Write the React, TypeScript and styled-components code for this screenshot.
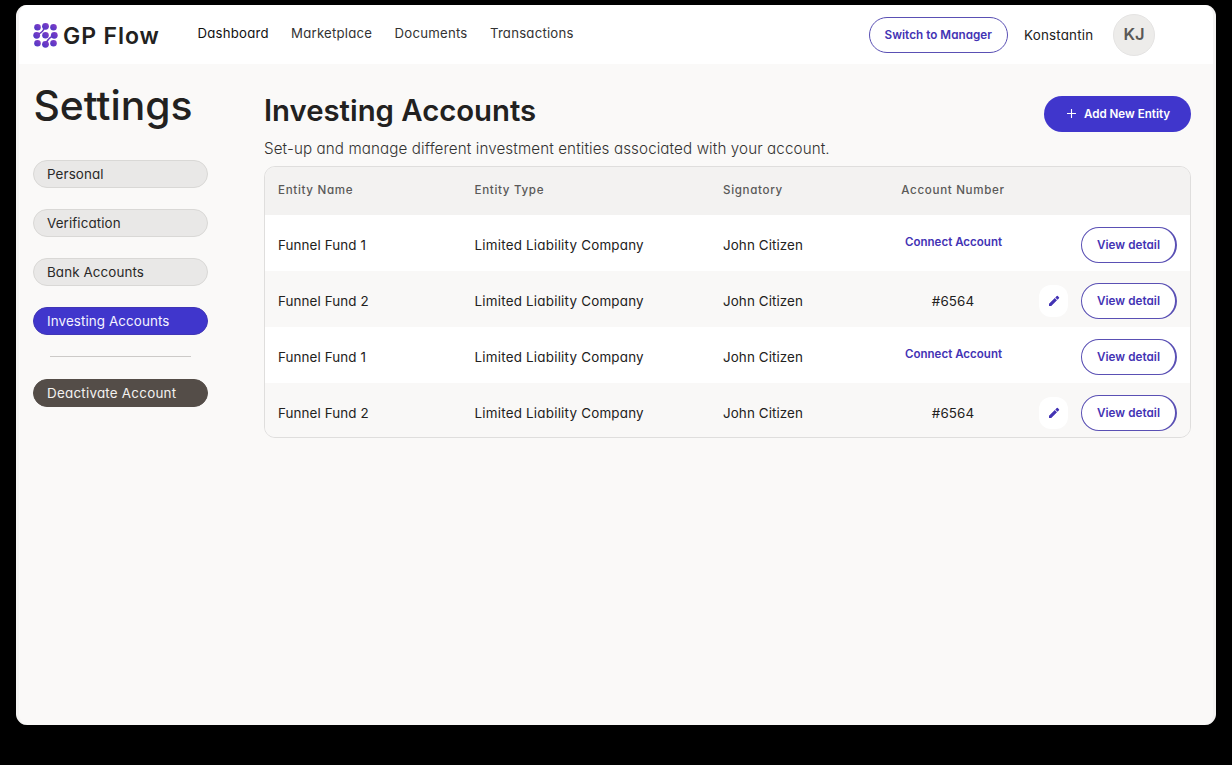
import React from "react";
import styled, { createGlobalStyle } from "styled-components";

const GlobalStyle = createGlobalStyle`
  * { box-sizing: border-box; }
  html, body { margin: 0; background: #000; }
  body {
    font-family: Inter, "Liberation Sans", sans-serif;
    font-feature-settings: "cv11" 1;
    color: #222120;
  }
  h1, h2, p { margin: 0; }
  button { font: inherit; font-feature-settings: inherit; margin: 0; padding: 0; }
`;

const Desktop = styled.div`
  height: 765px;
  padding: 5px 16px 40px;
  background: #000;
`;

const Window = styled.div`
  display: flex;
  flex-direction: column;
  height: 720px;
  border-radius: 11px;
  overflow: hidden;
  background: #faf9f8;
  border: solid #f4f3f2;
  border-width: 0 3px;
`;

const Header = styled.header`
  display: flex;
  align-items: center;
  height: 59px;
  padding: 1px 58px 0 14px;
  background: #fff;
`;

const Brand = styled.div`
  display: flex;
  align-items: center;
  width: 164px;
  gap: 5px;
`;

const BrandName = styled.span`
  padding-top: 1px;
  font-size: 23px;
  line-height: 28px;
  font-weight: 580;
  letter-spacing: 0.9px;
  white-space: nowrap;
`;

const Nav = styled.nav`
  display: flex;
  gap: 22.4px;
  padding: 0 0 4px 0.5px;
`;

const NavLink = styled.a<{ $active?: boolean }>`
  font-size: 13.2px;
  line-height: 20px;
  letter-spacing: 0.22px;
  color: ${(p) => (p.$active ? "#111" : "#333")};
`;

const UserArea = styled.div`
  display: flex;
  align-items: center;
  margin-left: auto;
`;

const OutlineButton = styled.button<{ $width: number; $heavy?: boolean }>`
  width: ${(p) => p.$width}px;
  height: 36px;
  padding-bottom: 1px;
  border: 1px solid #5a50b4;
  border-right-width: ${(p) => (p.$heavy ? 2 : 1)}px;
  border-radius: 18px;
  background: #fff;
  color: #4333b4;
  font-size: 11.7px;
  font-weight: 600;
  letter-spacing: 0.03px;
  white-space: nowrap;
`;

const UserName = styled.span`
  width: 89px;
  margin-left: 16px;
  padding-bottom: 1px;
  font-size: 13.4px;
  letter-spacing: 0.2px;
`;

const Avatar = styled.div`
  display: grid;
  place-items: center;
  width: 42px;
  height: 42px;
  padding-bottom: 2px;
  border: 1px solid #e4e3e2;
  border-radius: 50%;
  background: #edecea;
  color: #595857;
  font-size: 16.5px;
  font-weight: 600;
`;

const Body = styled.div`
  display: flex;
  flex: 1;
  padding: 0 22px 0 14px;
`;

const Sidebar = styled.aside`
  flex: none;
  width: 175px;
  margin-right: 56px;
  padding-top: 15px;
`;

const PageTitle = styled.h1`
  height: 81px;
  padding-left: 0.5px;
  font-size: 40.8px;
  line-height: 52px;
  font-weight: 500;
  white-space: nowrap;
`;

const Menu = styled.div`
  display: flex;
  flex-direction: column;
  gap: 21px;
`;

const menuTones = {
  plain: { bg: "#e9e8e7", edge: "#d9d8d6", text: "#2a2928" },
  active: { bg: "#4036cc", edge: "#4036b6", text: "#f4f3ff" },
  danger: { bg: "#544d48", edge: "#544d48", text: "#f3f1ef" },
};

const MenuItem = styled.button<{ $tone: keyof typeof menuTones }>`
  height: 28px;
  padding: 0 13px;
  border: 1px solid ${(p) => menuTones[p.$tone].edge};
  border-radius: 14px;
  background: ${(p) => menuTones[p.$tone].bg};
  color: ${(p) => menuTones[p.$tone].text};
  font-size: 13.4px;
  letter-spacing: ${(p) => (p.$tone === "danger" ? 0.24 : 0.1)}px;
  text-align: left;
`;

const Divider = styled.hr`
  width: 141px;
  height: 1px;
  margin: 0 auto 1px;
  border: 0;
  background: #cccac8;
`;

const Main = styled.main`
  flex: 1;
  min-width: 0;
  padding-top: 26px;
`;

const Intro = styled.div`
  display: flex;
  justify-content: space-between;
  height: 76px;
`;

const SectionTitle = styled.h2`
  height: 49px;
  padding-top: 1px;
  font-size: 29.3px;
  line-height: 40px;
  font-weight: 600;
`;

const Subtitle = styled.p`
  font-size: 15.2px;
  line-height: 20px;
  font-weight: 300;
  letter-spacing: 0.1px;
  color: #333231;
`;

const AddButton = styled.button`
  display: flex;
  align-items: center;
  justify-content: center;
  gap: 8px;
  width: 147px;
  height: 36px;
  margin-top: 6px;
  padding: 0 0 1px 2px;
  border: 0;
  border-radius: 18px;
  background: #4036cc;
  color: #fff;
  font-size: 11.6px;
  font-weight: 600;
`;

const Table = styled.div`
  height: 272px;
  border: 1px solid #dfdedd;
  border-radius: 11px;
  overflow: hidden;
`;

const gridColumns = "196.5px 248.5px 145px 170px 1fr";

const HeadRow = styled.div`
  display: grid;
  grid-template-columns: ${gridColumns};
  align-items: center;
  height: 48px;
  padding: 0 13px 3px;
  background: #f3f2f1;
  color: #5a5958;
  font-size: 11.6px;
  font-weight: 500;
  letter-spacing: 0.67px;
`;

const Row = styled.div<{ $shaded: boolean }>`
  display: grid;
  grid-template-columns: ${gridColumns};
  align-items: center;
  height: 56px;
  padding: 4px 13px 0;
  background: ${(p) => (p.$shaded ? "#f9f8f7" : "#fff")};
  font-size: 13.4px;
  letter-spacing: 0.1px;
`;

const EntityType = styled.span`
  letter-spacing: 0.22px;
`;

const AccountCell = styled.div`
  text-align: center;
`;

const ConnectLink = styled.a`
  display: block;
  padding: 0 0 7px 1px;
  color: #4333b4;
  font-size: 11.5px;
  font-weight: 600;
  letter-spacing: 0.03px;
`;

const Actions = styled.div`
  display: flex;
  align-items: center;
  justify-content: flex-end;
  gap: 13px;
`;

const EditButton = styled.button`
  display: grid;
  place-items: center;
  width: 29px;
  height: 32px;
  border: 0;
  border-radius: 12px;
  background: #fff;
`;

const Logo = () => (
  <svg width="25" height="26" viewBox="0 0 25 26">
    <defs>
      <linearGradient id="brand" x1="0" y1="1" x2="1" y2="0">
        <stop offset="0" stopColor="#4438c4" />
        <stop offset="1" stopColor="#8b3cc8" />
      </linearGradient>
    </defs>
    <g fill="url(#brand)">
      <circle cx="4.5" cy="5.3" r="3.3" />
      <circle cx="12.5" cy="4.3" r="3.4" />
      <circle cx="20.5" cy="5.3" r="3.3" />
      <circle cx="3.7" cy="13.3" r="3.4" />
      <circle cx="12.5" cy="13.3" r="3.3" />
      <circle cx="21.3" cy="13.3" r="3.4" />
      <circle cx="4.5" cy="21.3" r="3.3" />
      <circle cx="12.5" cy="22.3" r="3.4" />
      <circle cx="20.5" cy="21.3" r="3.3" />
    </g>
    <path d="M5.5 12.2Q10 9.8 11.5 6M13.5 20.3Q15 16.5 19.5 14.1" stroke="#6638c4" strokeWidth="1.3" fill="none" />
  </svg>
);

const Pencil = () => (
  <svg width="12" height="12" viewBox="0 0 24 24" fill="#4333b4">
    <path d="M2 17.5V22h4.5L18 10.5 13.5 6zM22 6.5a1.5 1.5 0 0 0 0-2L19.5 2a1.5 1.5 0 0 0-2 0L14.5 5 19 9.5z" />
  </svg>
);

const Plus = () => (
  <svg width="9" height="9" viewBox="0 0 9 9" stroke="#fff" strokeWidth="1.1">
    <path d="M4.5 0v9M0 4.5h9" />
  </svg>
);

const entities = [
  { name: "Funnel Fund 1", account: null },
  { name: "Funnel Fund 2", account: "#6564" },
  { name: "Funnel Fund 1", account: null },
  { name: "Funnel Fund 2", account: "#6564" },
];

export default function App() {
  return (
    <Desktop>
      <GlobalStyle />
      <Window>
        <Header>
          <Brand>
            <Logo />
            <BrandName>GP Flow</BrandName>
          </Brand>
          <Nav>
            <NavLink $active>Dashboard</NavLink>
            <NavLink>Marketplace</NavLink>
            <NavLink>Documents</NavLink>
            <NavLink>Transactions</NavLink>
          </Nav>
          <UserArea>
            <OutlineButton $width={139.5}>Switch to Manager</OutlineButton>
            <UserName>Konstantin</UserName>
            <Avatar>KJ</Avatar>
          </UserArea>
        </Header>
        <Body>
          <Sidebar>
            <PageTitle>Settings</PageTitle>
            <Menu>
              <MenuItem $tone="plain">Personal</MenuItem>
              <MenuItem $tone="plain">Verification</MenuItem>
              <MenuItem $tone="plain">Bank Accounts</MenuItem>
              <MenuItem $tone="active">Investing Accounts</MenuItem>
              <Divider />
              <MenuItem $tone="danger">Deactivate Account</MenuItem>
            </Menu>
          </Sidebar>
          <Main>
            <Intro>
              <div>
                <SectionTitle>Investing Accounts</SectionTitle>
                <Subtitle>Set-up and manage different investment entities associated with your account.</Subtitle>
              </div>
              <AddButton>
                <Plus />
                Add New Entity
              </AddButton>
            </Intro>
            <Table>
              <HeadRow>
                <span>Entity Name</span>
                <span>Entity Type</span>
                <span>Signatory</span>
                <AccountCell>Account Number</AccountCell>
              </HeadRow>
              {entities.map((entity, i) => (
                <Row key={i} $shaded={i % 2 === 1}>
                  <span>{entity.name}</span>
                  <EntityType>Limited Liability Company</EntityType>
                  <span>John Citizen</span>
                  <AccountCell>
                    {entity.account ?? <ConnectLink>Connect Account</ConnectLink>}
                  </AccountCell>
                  <Actions>
                    {entity.account && (
                      <EditButton aria-label="Edit account">
                        <Pencil />
                      </EditButton>
                    )}
                    <OutlineButton $width={96} $heavy>View detail</OutlineButton>
                  </Actions>
                </Row>
              ))}
            </Table>
          </Main>
        </Body>
      </Window>
    </Desktop>
  );
}
